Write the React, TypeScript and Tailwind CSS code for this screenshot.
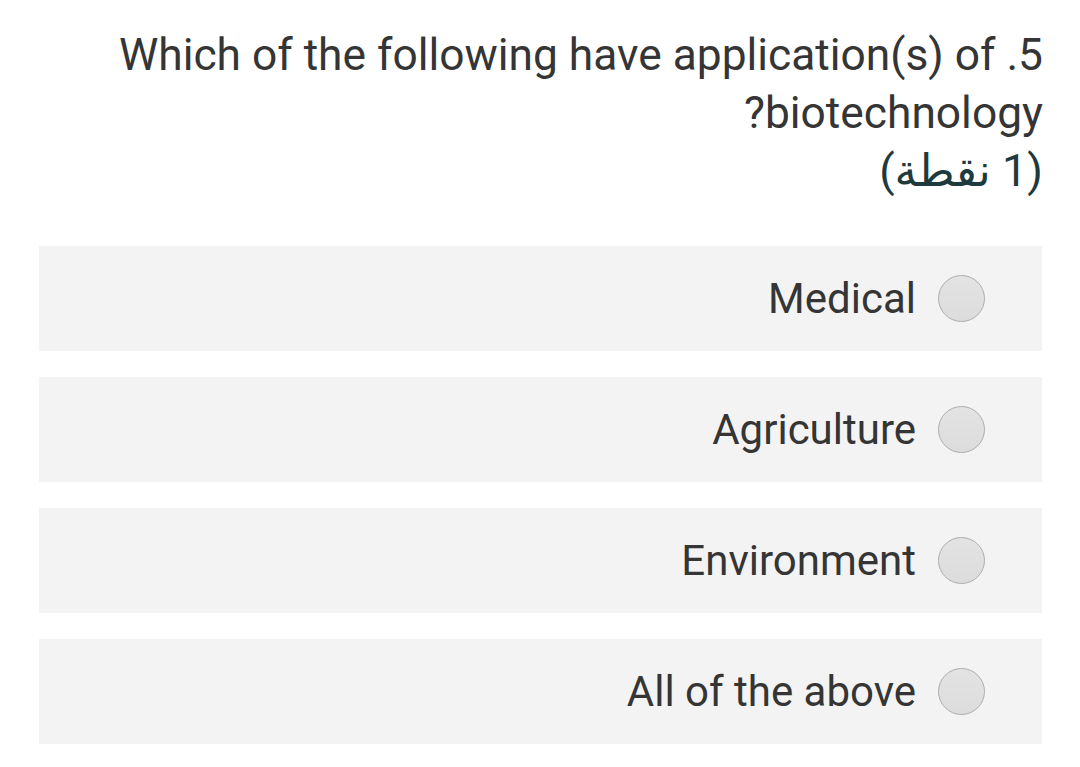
const options = ["Medical", "Agriculture", "Environment", "All of the above"];

function Radio() {
  return (
    <span className="inline-block w-[47px] h-[47px] shrink-0 rounded-full border-[1.5px] border-[#adadad] bg-gradient-to-b from-[#e3e3e3] to-[#dcdcdc]" />
  );
}

export default function App() {
  return (
    <div className="w-[1080px] h-[767px] bg-white font-['Roboto','DejaVu_Sans',sans-serif] text-[#353535] overflow-hidden">
      <div className="pt-[26px] pr-[37px] text-right text-[44.3px] leading-[58px]">
        <div>Which of the following have application(s) of .5</div>
        <div>?biotechnology</div>
        <div dir="rtl" className="text-[45px] text-[#1f3a3d]">
          (1 نقطة)
        </div>
      </div>
      <div className="mt-[46px] pl-[39px] pr-[38px] flex flex-col gap-[26.5px]">
        {options.map((o) => (
          <div
            key={o}
            className="h-[104.5px] bg-[#f3f3f3] flex items-center justify-end gap-[22px] pr-[57px]"
          >
            <span className="text-[42px]">{o}</span>
            <Radio />
          </div>
        ))}
      </div>
    </div>
  );
}
